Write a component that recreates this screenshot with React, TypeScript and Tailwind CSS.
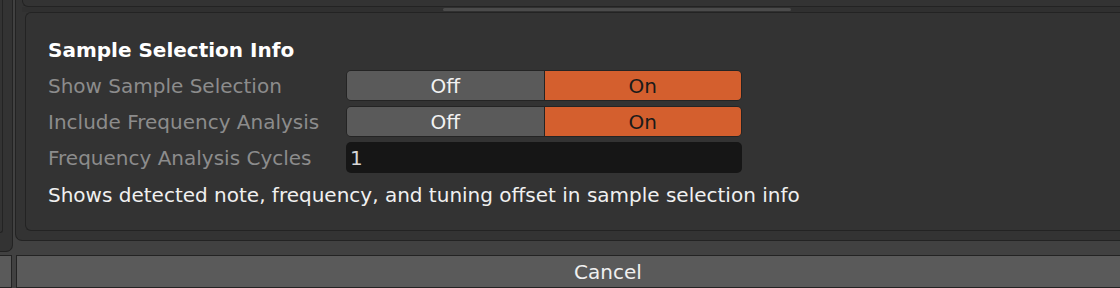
import React from "react";

function Toggle() {
  return (
    <div className="flex h-[31px] w-[396px] rounded-[5px] border border-[#242424] overflow-hidden">
      <div className="flex-1 bg-[#5a5a5a] flex items-center justify-center text-[#f2f2f2] border-r border-[#242424]">
        Off
      </div>
      <div className="flex-1 bg-[#d45f2e] flex items-center justify-center text-[#1a1a1a]">
        On
      </div>
    </div>
  );
}

export default function App() {
  return (
    <div className="w-[1120px] h-[288px] overflow-hidden bg-[#414141] flex flex-col font-['DejaVu_Sans',sans-serif] text-[20px] leading-[24px]">
      <div className="flex h-[255px] shrink-0">
        {/* left panel */}
        <div className="w-[13px] h-[252px] shrink-0 bg-[#333333] border-r border-b border-[#232323] rounded-br-[7px] overflow-hidden">
          <div className="w-[3px] h-[233px] border-r border-b border-[#232323] rounded-br-[6px]" />
        </div>
        <div className="w-[2px] shrink-0" />
        {/* outer panel */}
        <div className="flex-1 h-[241px] bg-[#333333] border-l border-b border-[#232323] rounded-bl-[7px] pl-[6px] flex flex-col">
          <div className="h-[7px] shrink-0 border-l border-b border-[#232323] rounded-bl-[6px]" />
          <div className="h-[5px] shrink-0 flex items-center pl-[421px] bg-[#303030]">
            <div className="w-[348px] h-[3px] rounded-[2px] bg-[#4b4b4b]" />
          </div>
          <div className="ml-[3px] h-[219px] shrink-0 border-l border-t border-b border-[#232323] rounded-l-[6px] pl-[22px] pt-[25px] flex flex-col">
            <div className="font-bold text-white h-[24px]">Sample Selection Info</div>
            <div className="mt-[8px] grid grid-cols-[298px_396px] gap-y-[5px] items-center">
              <div className="text-[#8c8c8c]">Show Sample Selection</div>
              <Toggle />
              <div className="text-[#8c8c8c]">Include Frequency Analysis</div>
              <Toggle />
              <div className="text-[#8c8c8c]">Frequency Analysis Cycles</div>
              <div className="h-[31px] w-[396px] rounded-[5px] bg-[#161616] flex items-center pl-[4px] text-[#d6d6d6]">
                1
              </div>
            </div>
            <div className="mt-[10px] text-[#f0f0f0]">
              Shows detected note, frequency, and tuning offset in sample selection info
            </div>
          </div>
        </div>
      </div>
      {/* bottom buttons */}
      <div className="flex h-[33px] shrink-0 gap-[4px]">
        <div className="w-[12px] shrink-0 bg-[#5a5a5a] border-t border-b border-r border-[#232323]" />
        <div className="w-[1184px] shrink-0 bg-[#5a5a5a] border border-[#232323] flex items-center justify-center text-[#f0f0f0]">
          Cancel
        </div>
      </div>
    </div>
  );
}
